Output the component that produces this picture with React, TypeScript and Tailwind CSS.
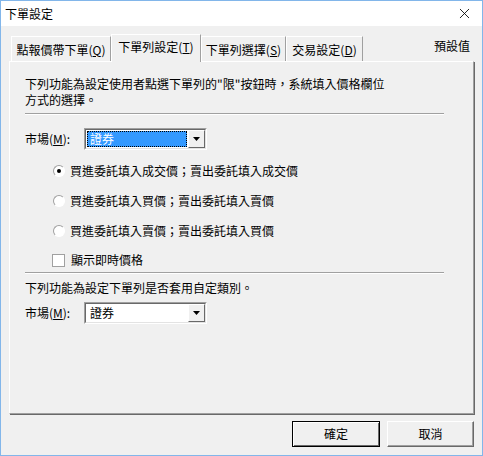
import { X } from "lucide-react";

const FONT = "font-['Noto_Sans_CJK_TC','Noto_Sans',sans-serif]";

const TABS = [
  { label: "點報價帶下單", key: "Q", w: "w-[100px]" },
  { label: "下單列設定", key: "T", w: "w-[90px]", active: true },
  { label: "下單列選擇", key: "S", w: "w-[85px]" },
  { label: "交易設定", key: "D", w: "w-[77px]" },
];

const OPTIONS = [
  "買進委託填入成交價；賣出委託填入成交價",
  "買進委託填入買價；賣出委託填入賣價",
  "買進委託填入賣價；賣出委託填入買價",
];

function Combo({ focused }: { focused?: boolean }) {
  return (
    <div className="flex h-[22px] w-[123px] border border-t-[#a0a0a0] border-l-[#a0a0a0] border-r-white border-b-white">
      <div className="flex flex-1 border border-t-[#696969] border-l-[#696969] border-r-[#e3e3e3] border-b-[#e3e3e3] bg-white">
        <div className="flex flex-1 p-px">
          <div
            className={
              focused
                ? "flex flex-1 items-center border border-dotted border-black bg-[#3399ff] pl-[2px] text-white"
                : "flex flex-1 items-center pl-[3px]"
            }
          >
            證券
          </div>
        </div>
        <div className="flex w-[17px] items-center justify-center border border-t-white border-l-white border-r-[#696969] border-b-[#696969] bg-[#f0f0f0]">
          <svg width="7" height="4" viewBox="0 0 7 4">
            <path d="M0 0h7L3.5 4z" fill="#000" />
          </svg>
        </div>
      </div>
    </div>
  );
}

function MarketRow({ focused }: { focused?: boolean }) {
  return (
    <div className="flex items-center">
      <span className="w-[59px]">
        市場(<u>M</u>):
      </span>
      <Combo focused={focused} />
    </div>
  );
}

export default function App() {
  return (
    <div
      className={`${FONT} flex h-[456px] w-[483px] flex-col border border-[#82b6ea] bg-[#f0f0f0] text-[12px] leading-[16px] text-black`}
    >
      <div className="flex h-[25px] items-center justify-between bg-white pl-[4px] pr-[9px]">
        <span>下單設定</span>
        <X size={17} strokeWidth={1.2} />
      </div>

      <div className="flex h-[35px] items-end pl-[10px]">
        {TABS.map((t) => (
          <div
            key={t.key}
            className={
              t.active
                ? `${t.w} relative z-10 -mb-px flex h-[28px] items-start justify-center border border-b-0 border-t-white border-l-white border-r-[#a0a0a0] bg-[#f0f0f0] pt-[4px]`
                : `${t.w} flex h-[25px] items-start justify-center border border-b-0 border-t-white border-l-white border-r-[#a0a0a0] pt-[5px]`
            }
          >
            {t.label}(<u>{t.key}</u>)
          </div>
        ))}
        <span className="mb-[7px] ml-auto mr-[12px]">預設值</span>
      </div>

      <div className="mx-[8px] flex h-[353px] flex-col border-[1px] border-t-white border-l-white border-r-[#a0a0a0] border-b-[#a0a0a0] shadow-[1px_1px_0_#696969]">
        <div className="flex flex-col pl-[15px] pt-[14px]">
          <p>
            下列功能為設定使用者點選下單列的"限"按鈕時，系統填入價格欄位
            <br />
            方式的選擇。
          </p>
          <div className="mt-[5px] h-[2px] w-[419px] border-t border-b border-t-[#a0a0a0] border-b-white" />

          <div className="mt-[13px]">
            <MarketRow focused />
          </div>

          <div className="mt-[13px] flex flex-col gap-[14px] pl-[28px]">
            {OPTIONS.map((o, i) => (
              <label key={o} className="flex h-[16px] items-center gap-[5px]">
                <span className="flex h-[12px] w-[12px] items-center justify-center rounded-full border border-t-[#a0a0a0] border-l-[#a0a0a0] border-r-white border-b-white bg-white">
                  {i === 0 && <span className="h-[4px] w-[4px] rounded-full bg-black" />}
                </span>
                <span>{o}</span>
              </label>
            ))}
          </div>

          <label className="mt-[13px] flex h-[16px] items-center gap-[6px] pl-[27px]">
            <span className="h-[13px] w-[13px] border border-[#a0a0a0] bg-white" />
            <span>顯示即時價格</span>
          </label>

          <div className="mt-[4px] h-[2px] w-[419px] border-t border-b border-t-[#a0a0a0] border-b-white" />

          <p className="mt-[6px]">下列功能為設定下單列是否套用自定類別。</p>

          <div className="mt-[6px]">
            <MarketRow />
          </div>
        </div>
      </div>

      <div className="mt-[7px] flex justify-end gap-[7px] pr-[8px]">
        <button className="flex h-[26px] w-[88px] items-center justify-center border border-black bg-[#f0f0f0] shadow-[inset_1px_1px_0_white,inset_-1px_-1px_0_#696969]">
          確定
        </button>
        <button className="flex h-[26px] w-[87px] items-center justify-center border border-t-white border-l-white border-r-[#696969] border-b-[#696969] bg-[#f0f0f0] shadow-[inset_-1px_-1px_0_#a0a0a0]">
          取消
        </button>
      </div>
    </div>
  );
}
